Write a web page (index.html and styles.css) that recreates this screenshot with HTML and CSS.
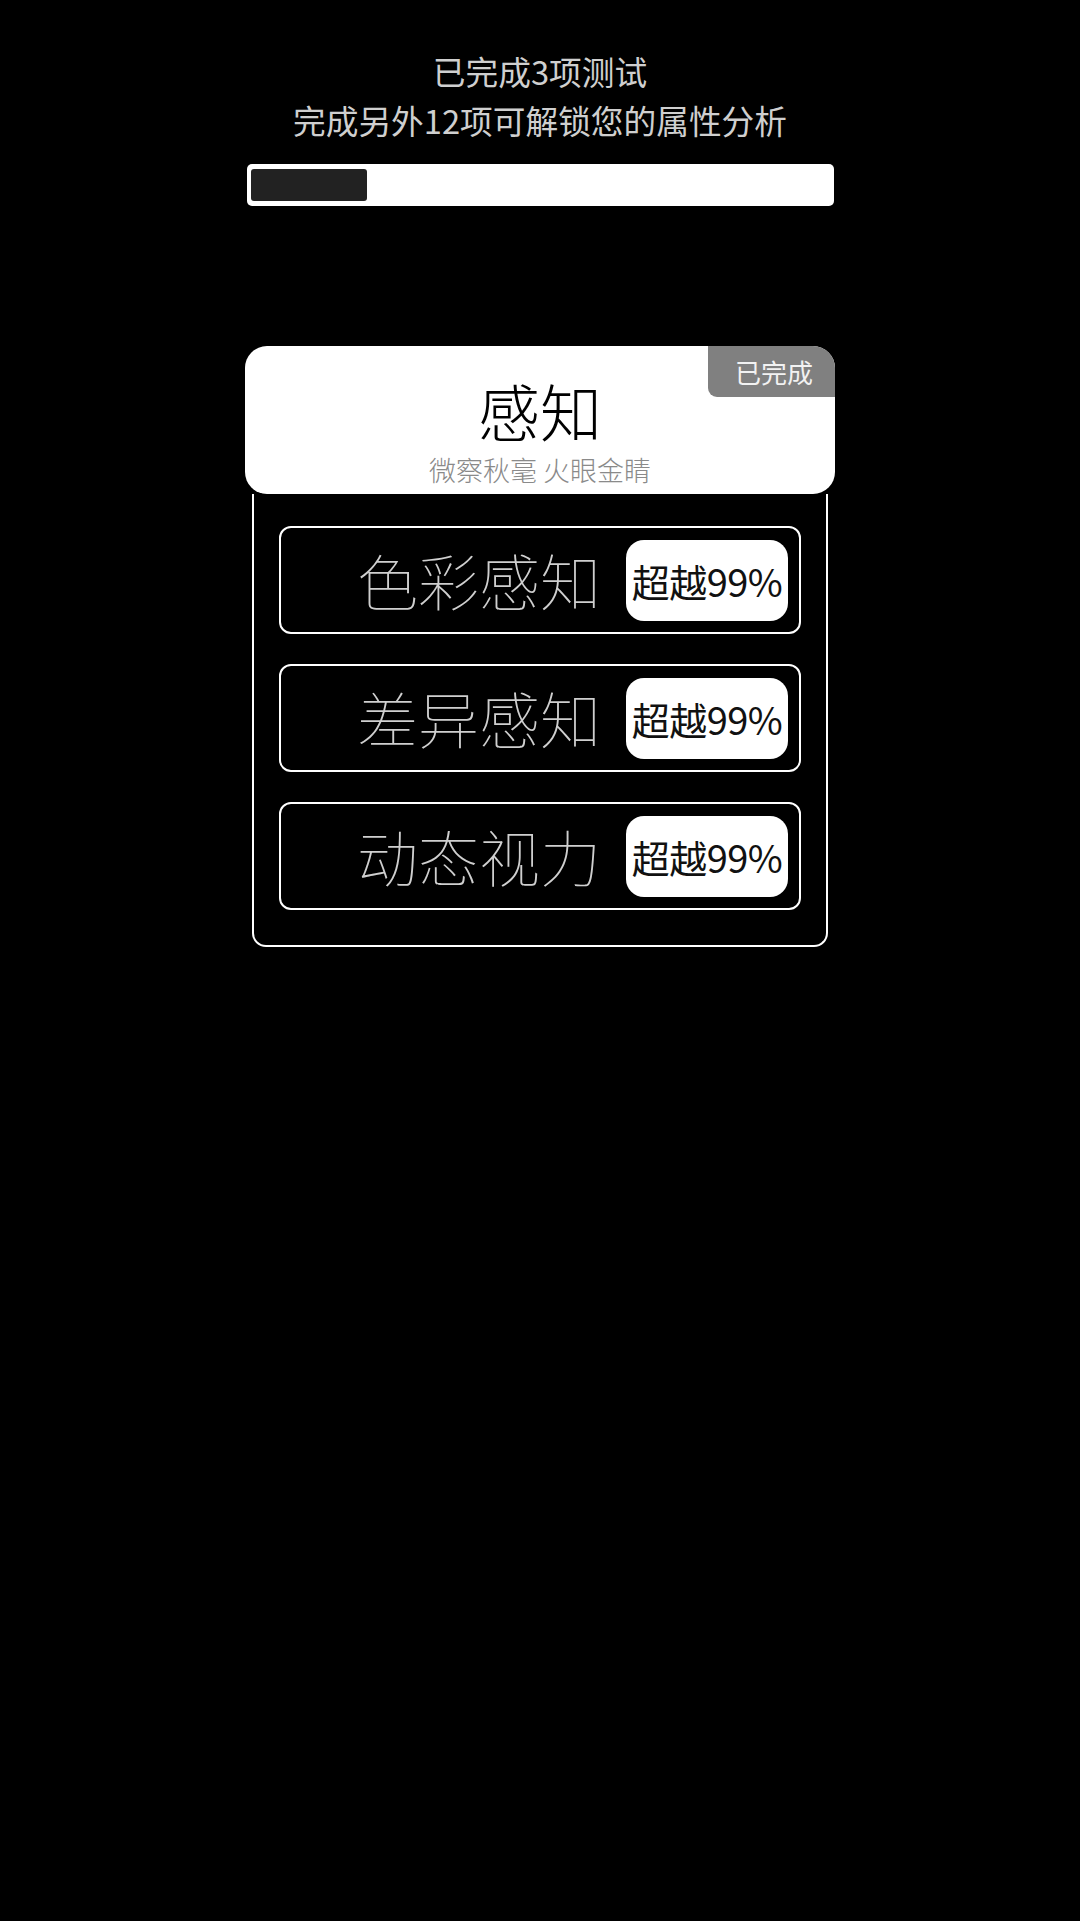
FILE: index.html
```html
<!DOCTYPE html>
<html lang="zh-CN">
<head>
<meta charset="utf-8">
<title>属性分析</title>
<link rel="stylesheet" href="styles.css">
</head>
<body>
<div class="page">
  <div class="header">
    <div class="line">已完成3项测试</div>
    <div class="line">完成另外12项可解锁您的属性分析</div>
  </div>
  <div class="progress">
    <div class="progress-fill" style="width: 116px"></div>
  </div>

  <div class="group">
    <div class="card">
      <div class="badge-done">已完成</div>
      <div class="card-title">感知</div>
      <div class="card-sub">微察秋毫 火眼金睛</div>
    </div>
    <div class="frame">
      <div class="item">
        <div class="item-name">色彩感知</div>
        <div class="item-score">超越99%</div>
      </div>
      <div class="item">
        <div class="item-name">差异感知</div>
        <div class="item-score">超越99%</div>
      </div>
      <div class="item">
        <div class="item-name">动态视力</div>
        <div class="item-score">超越99%</div>
      </div>
    </div>
  </div>
</div>
</body>
</html>
```

FILE: styles.css
```css
html, body {
  margin: 0;
  padding: 0;
  background: #000;
}

body {
  width: 1080px;
  height: 1921px;
  font-family: "Noto Sans CJK SC", "Noto Sans", sans-serif;
}

.page {
  display: flex;
  flex-direction: column;
  align-items: center;
  padding-top: 46px;
}

.header {
  display: flex;
  flex-direction: column;
  align-items: center;
  color: #cfcfcf;
  font-size: 32.7px;
  line-height: 49px;
}

.progress {
  margin-top: 20px;
  width: 587px;
  height: 42px;
  box-sizing: border-box;
  background: #fff;
  border-radius: 5px;
  padding: 5px 4px;
  display: flex;
}

.progress-fill {
  height: 100%;
  background: #222;
  border-radius: 3px;
}

.group {
  margin-top: 140px;
  display: flex;
  flex-direction: column;
  align-items: center;
}

.card {
  position: relative;
  width: 590px;
  height: 148px;
  box-sizing: border-box;
  background: #fff;
  border-radius: 22px;
  display: flex;
  flex-direction: column;
  align-items: center;
  padding-top: 34px;
  z-index: 1;
}

.badge-done {
  position: absolute;
  top: 0;
  right: 0;
  width: 127px;
  height: 51px;
  box-sizing: border-box;
  padding-left: 5px;
  background: #808080;
  color: #f2f2f2;
  font-size: 26px;
  line-height: 51px;
  text-align: center;
  border-radius: 0 22px 0 9px;
}

.card-title {
  font-size: 62px;
  line-height: 60px;
  color: #000;
  font-weight: 300;
}

.card-sub {
  margin-top: 15px;
  font-size: 27px;
  line-height: 30px;
  color: #8a8a8a;
  font-weight: 300;
}

.frame {
  width: 576px;
  box-sizing: border-box;
  border: 2px solid #fff;
  border-top: none;
  border-radius: 0 0 14px 14px;
  padding: 32px 25px 35px;
  display: flex;
  flex-direction: column;
  gap: 30px;
}

.item {
  height: 108px;
  box-sizing: border-box;
  border: 2px solid #fff;
  border-radius: 12px;
  display: flex;
  align-items: center;
  justify-content: flex-end;
  padding-right: 11px;
  gap: 25px;
}

.item-name {
  font-size: 61px;
  line-height: 70px;
  color: #cfcfcf;
  font-weight: 100;
}

.item-score {
  width: 162px;
  height: 81px;
  box-sizing: border-box;
  background: #fff;
  border-radius: 18px;
  color: #111;
  font-size: 38px;
  line-height: 81px;
  text-align: center;
  letter-spacing: -0.5px;
  white-space: nowrap;
}
```
